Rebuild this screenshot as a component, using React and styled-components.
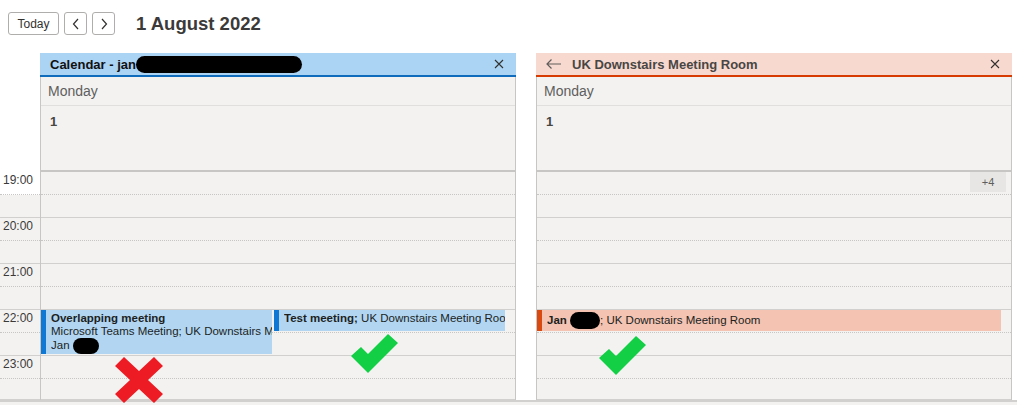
import React from "react"
import styled, { createGlobalStyle } from "styled-components"

const Global = createGlobalStyle`
  html, body { margin: 0; padding: 0; background: #fff; }
  body { font-family: "Segoe UI", "Liberation Sans", Arial, sans-serif; color: #323130; }
  * { box-sizing: border-box; }
`

const tones = {
  blue: { head: "#abd3f3", line: "#0f6cbd", ev: "#b2d6f2", bar: "#0f78d4" },
  peach: { head: "#f8d9cf", line: "#d83b01", ev: "#f4c3b1", bar: "#d84a10" }
}

const Page = styled.div`
  position: relative;
  width: 1017px;
  height: 405px;
  overflow: hidden;
`

const Toolbar = styled.div`
  display: flex;
  align-items: center;
  gap: 5px;
  padding: 12px 8px 18px;
  height: 53px;
`

const Btn = styled.button`
  height: 23px;
  min-width: ${p => (p.wide ? "51px" : "23px")};
  padding: 0 ${p => (p.wide ? "8px" : "0")};
  border: 1px solid #b0aeac;
  border-radius: 3px;
  background: #fff;
  color: #323130;
  font: 12px "Segoe UI", "Liberation Sans", Arial, sans-serif;
  display: flex;
  align-items: center;
  justify-content: center;
`

const Title = styled.div`
  margin-left: 16px;
  font-size: 18.5px;
  font-weight: 600;
  color: #3b3a39;
`

const Board = styled.div`
  display: flex;
  align-items: flex-start;
`

const Gutter = styled.div`
  width: 40px;
  flex-shrink: 0;
  display: flex;
  flex-direction: column;
`

const GutterTop = styled.div`
  height: 119px;
  flex-shrink: 0;
  background: #fff;
`

const Hour = styled.div`
  flex-shrink: 0;
  display: grid;
  grid-template-rows: 23px ${p => (p.last ? 21 : 23)}px;
  grid-template-columns: minmax(0, 1fr);
`

const Slot = styled.div`
  grid-column: 1;
  grid-row: ${p => p.row};
  background: ${p => (p.white ? "#fff" : "#f3f2f1")};
  border-bottom: 1px ${p => (p.row === 1 ? "dotted #c8c6c4" : "solid #d2d0ce")};
  font-size: 12px;
  padding: 1px 0 0 3px;
  color: #3b3a39;
`

const Panel = styled.div`
  width: ${p => p.w}px;
  flex-shrink: 0;
  margin-left: ${p => p.gap || 0}px;
  display: flex;
  flex-direction: column;
  background: #f3f2f1;
  border-left: 1px solid #c8c6c4;
  border-right: 1px solid #c8c6c4;
`

const PanelHead = styled.div`
  height: 24px;
  flex-shrink: 0;
  margin: 0 -1px;
  display: flex;
  align-items: center;
  gap: 10px;
  padding: 0 12px 0 10px;
  background: ${p => tones[p.tone].head};
  border-bottom: 2px solid ${p => tones[p.tone].line};
  font-size: 13px;
  font-weight: 700;
  color: ${p => (p.tone === "blue" ? "#111" : "#484644")};
`

const HeadTitle = styled.div`
  flex: 1;
  display: flex;
  align-items: center;
`

const Redact = styled.span`
  display: inline-block;
  width: ${p => p.w}px;
  height: ${p => p.h || 17}px;
  background: #000;
  border-radius: 9px;
  vertical-align: middle;
`

const DayName = styled.div`
  height: 29px;
  flex-shrink: 0;
  padding: 6px 0 0 7px;
  font-size: 14px;
  color: #605e5c;
  border-bottom: 1px solid #e1dfdd;
`

const DateCell = styled.div`
  height: 66px;
  flex-shrink: 0;
  padding: 8px 0 0 9px;
  font-size: 13px;
  font-weight: 700;
  color: #484644;
  border-bottom: 2px solid #c8c6c4;
`

const EventLayer = styled.div`
  grid-column: 1;
  grid-row: 1 / 3;
  display: flex;
  align-items: flex-start;
  gap: 2px;
  padding: 0 10px 0 0;
  min-width: 0;
`

const More = styled.div`
  grid-column: 1;
  grid-row: 1;
  justify-self: end;
  margin-right: 5px;
  width: 36px;
  height: 20px;
  background: #e8e6e4;
  color: #605e5c;
  font-size: 11px;
  display: flex;
  align-items: center;
  justify-content: center;
`

const Event = styled.div`
  flex: 1 1 0;
  min-width: 0;
  height: ${p => p.h}px;
  background: ${p => tones[p.tone].ev};
  border-left: 5px solid ${p => tones[p.tone].bar};
  padding: 2px 0 0 5px;
  font-size: 11.5px;
  line-height: 13px;
  color: #201f1e;
  overflow: hidden;
`

const Line = styled.div`
  white-space: nowrap;
  overflow: hidden;
  font-weight: ${p => (p.bold ? 700 : 400)};
`

const Footer = styled.div`
  height: 5px;
  border-top: 2px solid #d2d0ce;
  background: #f3f2f1;
`

const Mark = styled.svg`
  position: absolute;
  left: ${p => p.x}px;
  top: ${p => p.y}px;
`

const hours = ["19:00", "20:00", "21:00", "22:00", "23:00"]

const Close = () => (
  <svg width="10" height="10" viewBox="0 0 10 10">
    <path d="M1 1L9 9M9 1L1 9" stroke="#323130" strokeWidth="1.1" />
  </svg>
)

const Back = () => (
  <svg width="16" height="10" viewBox="0 0 16 10">
    <path d="M1 5H15M5.5 0.5L1 5L5.5 9.5" stroke="#605e5c" strokeWidth="1.2" fill="none" />
  </svg>
)

function Check({ x, y }) {
  return (
    <Mark x={x} y={y} width="47" height="40" viewBox="0 0 47 40">
      <path d="M0 22L10 13L17 20L37 0L47 9L17 39Z" fill="#12cf45" />
    </Mark>
  )
}

function Grid({ events, more }) {
  return hours.map((h, i) => (
    <Hour key={h} last={i === hours.length - 1}>
      <Slot row={1} />
      <Slot row={2} />
      {i === 0 && more && <More>+4</More>}
      {i === 3 && <EventLayer>{events}</EventLayer>}
    </Hour>
  ))
}

export default function App() {
  return (
    <Page>
      <Global />
      <Toolbar>
        <Btn wide>Today</Btn>
        <Btn>
          <svg width="8" height="12" viewBox="0 0 8 12"><path d="M6 1L1.5 6L6 11" stroke="#323130" strokeWidth="1.2" fill="none" /></svg>
        </Btn>
        <Btn>
          <svg width="8" height="12" viewBox="0 0 8 12"><path d="M2 1L6.5 6L2 11" stroke="#323130" strokeWidth="1.2" fill="none" /></svg>
        </Btn>
        <Title>1 August 2022</Title>
      </Toolbar>
      <Board>
        <Gutter>
          <GutterTop />
          {hours.map((h, i) => (
            <Hour key={h} last={i === hours.length - 1}>
              <Slot row={1} white={i === 0}>{h}</Slot>
              <Slot row={2} />
            </Hour>
          ))}
        </Gutter>
        <Panel w={476}>
          <PanelHead tone="blue">
            <HeadTitle>Calendar - jan<Redact w={166} /></HeadTitle>
            <Close />
          </PanelHead>
          <DayName>Monday</DayName>
          <DateCell>1</DateCell>
          <Grid
            events={[
              <Event key="a" tone="blue" h={44}>
                <Line bold>Overlapping meeting</Line>
                <Line>Microsoft Teams Meeting; UK Downstairs Meeting Room</Line>
                <Line>Jan <Redact w={26} h={16} /></Line>
              </Event>,
              <Event key="b" tone="blue" h={21}>
                <Line><b>Test meeting;</b> UK Downstairs Meeting Room</Line>
              </Event>
            ]}
          />
        </Panel>
        <Panel w={476} gap={20}>
          <PanelHead tone="peach">
            <Back />
            <HeadTitle>UK Downstairs Meeting Room</HeadTitle>
            <Close />
          </PanelHead>
          <DayName>Monday</DayName>
          <DateCell>1</DateCell>
          <Grid
            more
            events={[
              <Event key="c" tone="peach" h={21}>
                <Line><b>Jan</b> <Redact w={30} h={17} />; UK Downstairs Meeting Room</Line>
              </Event>
            ]}
          />
        </Panel>
      </Board>
      <Footer />
      <Mark x={115} y={357} width="48" height="46" viewBox="0 0 48 46">
        <path d="M0 9L9 0L24 14L39 0L48 9L33 23L48 37L39 46L24 32L9 46L0 37L15 23Z" fill="#ed1c24" />
      </Mark>
      <Check x={351} y={334} />
      <Check x={599} y={336} />
    </Page>
  )
}
